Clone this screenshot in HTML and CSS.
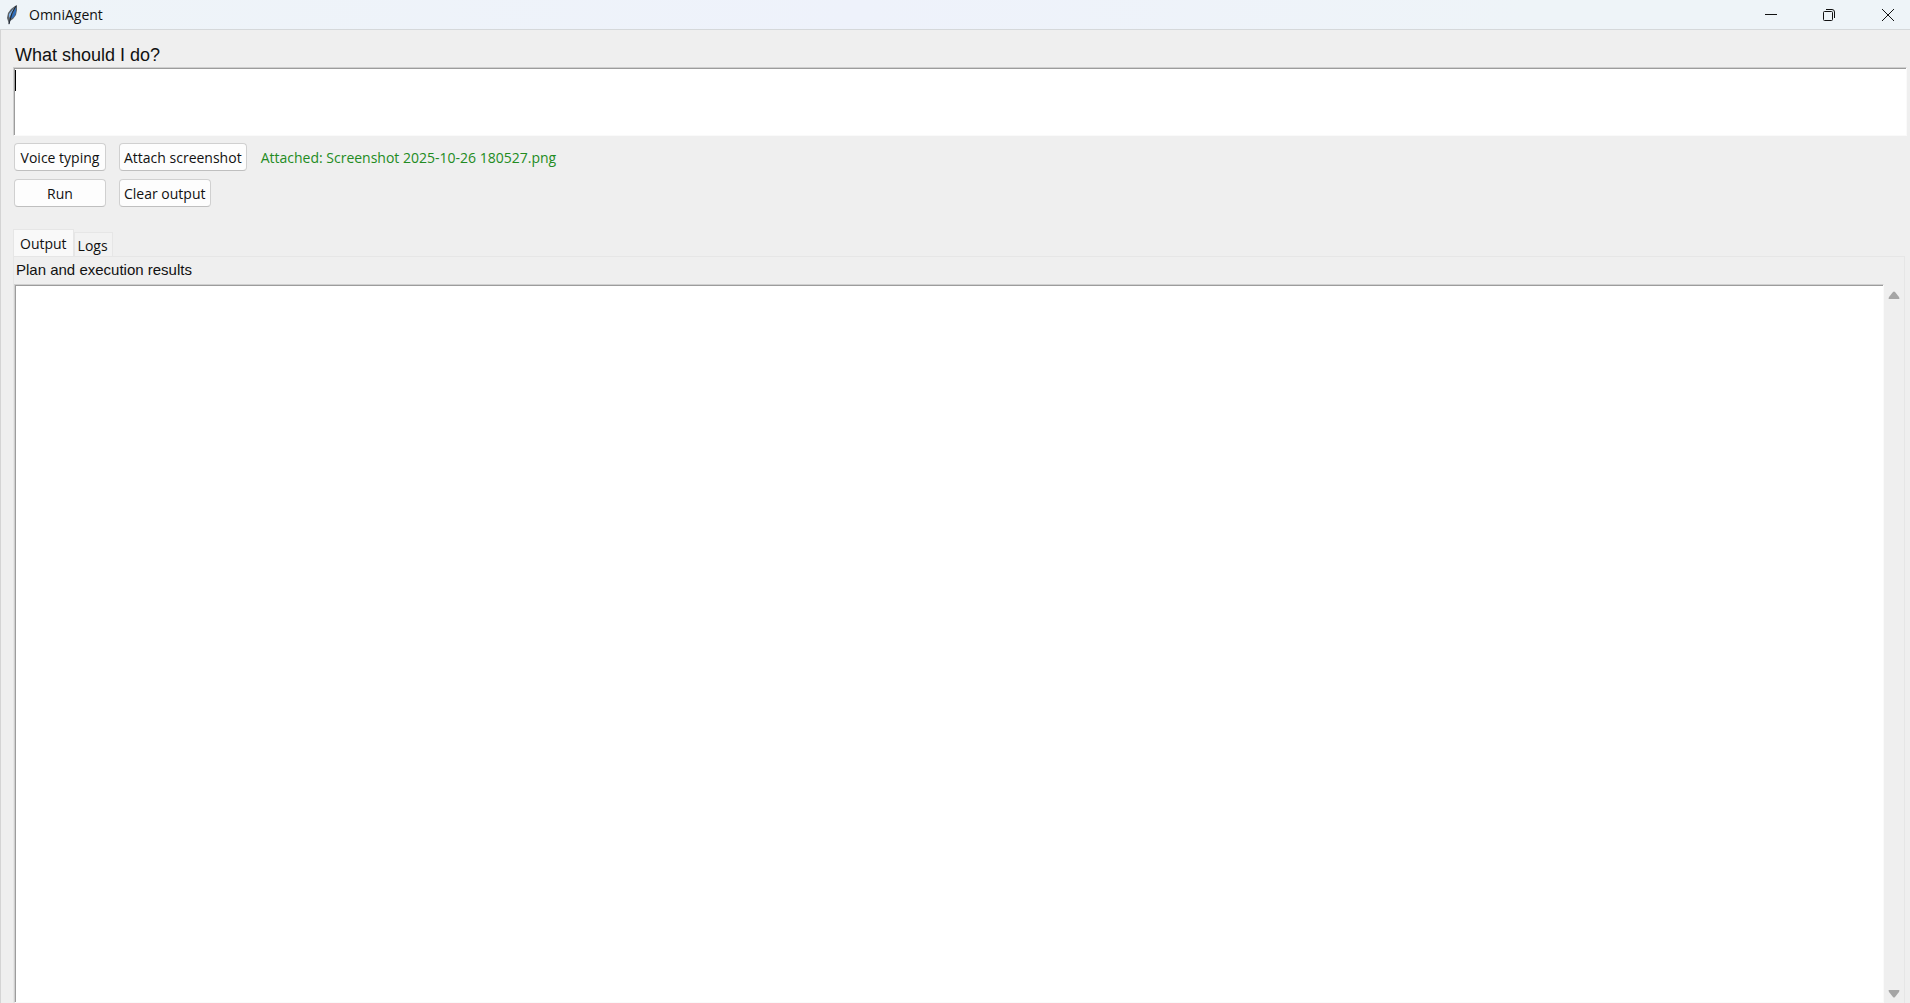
FILE: index.html
```html
<!DOCTYPE html>
<html lang="en">
<head>
<meta charset="UTF-8">
<meta name="viewport" content="width=device-width,initial-scale=1.0">
<title>OmniAgent</title>
<link rel="stylesheet" href="styles.css">
</head>
<body>
	<header class="titlebar">
		<svg class="feather" width="14" height="20" viewBox="0 0 14 20">
			<path d="M9 1 L11 0 L11 5 L10 10 L7 14 L4 16 L3 20 L2 16 L1 13 L2 8 L5 4 Z" fill="#5b6167"/>
			<path d="M10 2 L10 7 L8 12 L4 14 L7 8 Z" fill="#2e6dba"/>
			<path d="M8 3 L3 9 L3 13 L6 8 Z" fill="#7db2ea"/>
			<path d="M10 1 L6 8 L3 19" stroke="#1b2430" fill="none"/>
		</svg>
		<h1>OmniAgent</h1>
		<div class="win-btns">
			<button type="button" aria-label="Minimize"><svg width="12" height="12"><path d="M0 5.5H12"/></svg></button>
			<button type="button" aria-label="Restore"><svg width="12" height="12"><rect x="0.5" y="2.5" width="9" height="9" rx="1"/><path d="M3 .5H9Q11.500 .5 11.500 3V9"/></svg></button>
			<button type="button" aria-label="Close"><svg width="12" height="12"><path d="M0 0L12 12M12 0L0 12"/></svg></button>
		</div>
	</header>
	<main>
		<label class="ask" for="task">What should I do?</label>
		<div class="task-wrap">
			<textarea id="task"></textarea>
			<span class="caret"></span>
		</div>
		<div class="actions">
			<button type="button">Voice typing</button>
			<div class="row">
				<button type="button">Attach screenshot</button>
				<span class="attached">Attached: Screenshot 2025-10-26 180527.png</span>
			</div>
			<button type="button" id="run">Run</button>
			<div class="row">
				<button type="button" id="clear">Clear output</button>
			</div>
		</div>
		<div class="tabs" role="tablist">
			<button type="button" role="tab" class="tab active" aria-selected="true">Output</button>
			<button type="button" role="tab" class="tab" aria-selected="false">Logs</button>
		</div>
		<section class="pane">
			<label for="result">Plan and execution results</label>
			<div class="result-wrap">
				<textarea id="result"></textarea>
				<div class="scroll">
					<svg width="12" height="8"><path d="M1 8Q0 8 1 6L5 1Q6 0 7 1L11 6Q12 8 11 8Z"/></svg>
					<svg width="12" height="8"><path d="M1 0Q0 0 1 2L5 7Q6 8 7 7L11 2Q12 0 11 0Z"/></svg>
				</div>
			</div>
		</section>
	</main>
	<script>
		var result = document.getElementById("result");
		document.getElementById("clear").onclick = function(){
			result.value = "";
		}
	</script>
</body>
</html>
```

FILE: styles.css
```css
*{
	margin: 0;
	padding: 0;
	box-sizing: border-box;
}
body{
	display: flex;
	flex-direction: column;
	height: 100vh;
	overflow: hidden;
	background: #efefef;
	color: #111;
	font-family: "Open Sans", "Noto Sans", sans-serif;
	font-size: 14px;
}
button{
	font: inherit;
	color: inherit;
}
.titlebar{
	display: flex;
	align-items: center;
	height: 30px;
	padding-left: 6px;
	background: linear-gradient(90deg, #eef4f8, #eef2fb 45%, #eef4f8 80%);
	border-bottom: 1px solid #d5d8da;
}
.titlebar h1{
	margin-left: 9px;
	font-size: 14px;
	font-weight: normal;
}
.win-btns{
	display: flex;
	margin-left: auto;
}
.win-btns button{
	display: flex;
	align-items: center;
	justify-content: center;
	width: 58px;
	height: 28px;
	background: none;
	border: 0;
}
.win-btns button:last-child{
	width: 52px;
	padding-left: 8px;
}
.win-btns svg{
	fill: none;
	stroke: #111;
}
main{
	flex: 1;
	display: flex;
	flex-direction: column;
	min-height: 0;
	padding: 14px 3px 0 12px;
	border-left: 1px solid #d4d4d4;
}
label{
	font-family: "Liberation Sans", Arial, sans-serif;
}
.ask{
	padding-left: 2px;
	font-size: 18px;
	line-height: 23px;
}
textarea{
	display: block;
	width: 100%;
	background: #fff;
	border: 1px solid #cfcfcf;
	border-right-color: #fafafa;
	border-bottom-color: #fafafa;
	box-shadow: inset 1px 1px #9c9c9c;
	outline: 0;
	resize: none;
	font: 16px "Liberation Sans", Arial, sans-serif;
}
.task-wrap{
	position: relative;
}
#task{
	height: 69px;
	padding: 2px;
}
.caret{
	position: absolute;
	top: 3px;
	left: 2px;
	width: 1px;
	height: 21px;
	background: #000;
}
.actions{
	display: grid;
	grid-template-columns: 92px 1fr;
	gap: 8px 13px;
	padding: 7px 1px 0;
}
.row{
	display: flex;
	align-items: center;
	gap: 14px;
}
.actions button{
	height: 28px;
	padding: 0 4px;
	background: #fdfdfd;
	border: 1px solid #d0d0d0;
	border-bottom-color: #bfbfbf;
	border-radius: 4px;
	white-space: nowrap;
}
.attached{
	color: #228b22;
}
.tabs{
	display: flex;
	align-items: flex-end;
	padding-top: 22px;
}
.tab{
	height: 24px;
	padding: 2px 4px 0 3px;
	background: #f2f2f2;
	border: 1px solid #e6e6e6;
	border-bottom: 0;
}
.tab.active{
	height: 27px;
	padding: 0 6px;
	background: #f9f9f9;
}
.pane{
	flex: 1;
	display: flex;
	flex-direction: column;
	min-height: 0;
	margin-right: 2px;
	border: 1px solid #e6e6e6;
	border-bottom: 0;
}
.pane label{
	padding: 3px 2px 4px;
	font-size: 15px;
	line-height: 20px;
}
.result-wrap{
	flex: 1;
	display: flex;
}
#result{
	flex: 1;
}
.scroll{
	display: flex;
	flex-direction: column;
	justify-content: space-between;
	align-items: center;
	width: 20px;
	padding: 7px 0 5px;
}
.scroll svg{
	fill: #a5a5a5;
}
```
